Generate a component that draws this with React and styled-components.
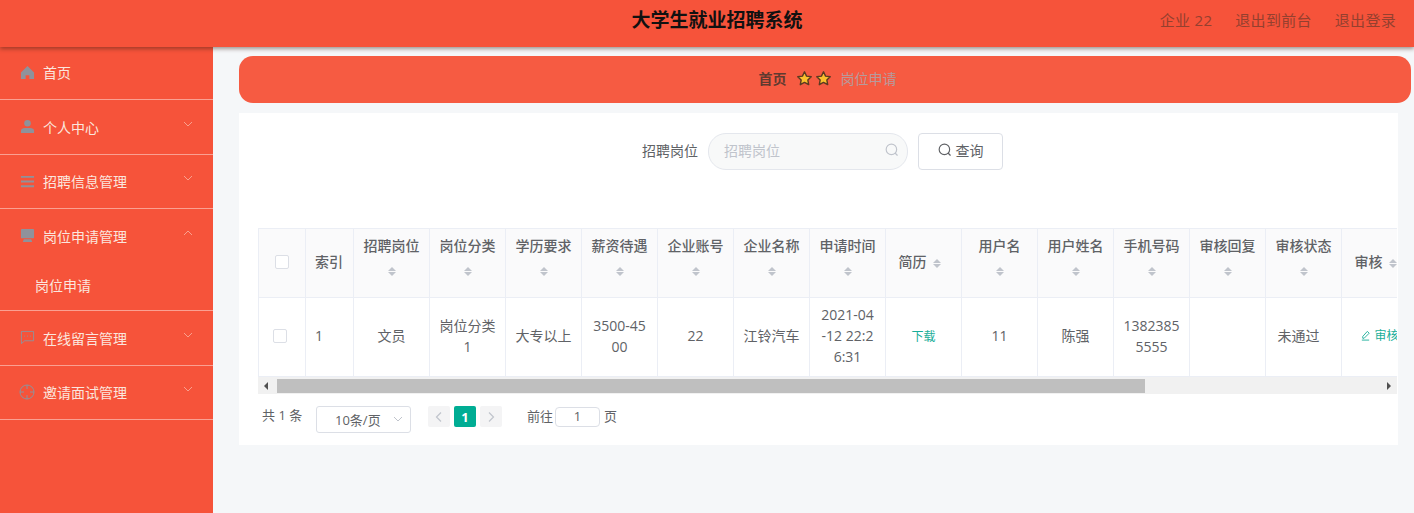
import React from 'react';
import styled, { createGlobalStyle } from 'styled-components';

const GlobalStyle = createGlobalStyle`
  html, body {
    margin: 0;
    height: 100%;
    overflow: hidden;
    background: #f5f7f9;
  }
  body, input {
    font-family: "Open Sans", "Noto Sans CJK SC", sans-serif;
  }
  * {
    box-sizing: border-box;
  }
`;

const Page = styled.div`
  display: flex;
  flex-direction: column;
  width: 1414px;
  height: 513px;
  overflow: hidden;
`;

const Header = styled.header`
  position: relative;
  z-index: 2;
  display: grid;
  grid-template-columns: 1fr auto 1fr;
  align-items: center;
  flex: none;
  height: 47px;
  padding: 0 18px 9px 38px;
  background: #f6533a;
  box-shadow: 0 2px 4px rgba(60, 30, 20, 0.45);
`;

const Title = styled.div`
  grid-column: 2;
  font-size: 19px;
  font-weight: 700;
  color: #111;
`;

const HeaderLinks = styled.div`
  display: flex;
  justify-content: flex-end;
  gap: 23px;
  font-size: 15px;
  letter-spacing: 0.3px;
  color: #94402f;
`;

const Body = styled.div`
  display: flex;
  flex: 1;
  min-height: 0;
`;

const Sidebar = styled.aside`
  flex: none;
  width: 213px;
  background: #f6533a;
`;

const MenuGroup = styled.div`
  border-bottom: 1px solid rgba(255, 255, 255, 0.45);
`;

const MenuRow = styled.div`
  display: flex;
  align-items: center;
  height: ${({ first }) => (first ? '52px' : '53.5px')};
  padding: 0 19px;
  padding-bottom: ${({ first }) => (first ? '2px' : '0')};
  font-size: 14px;
  color: #fbe6de;
`;

const MenuIcon = styled.span`
  display: flex;
  align-items: center;
  justify-content: center;
  width: 16px;
  height: 16px;
  margin-right: 8px;
  color: #8f929b;
`;

const MenuLabel = styled.span`
  flex: 1;
`;

const Caret = styled.svg`
  width: 12px;
  height: 12px;
  margin-top: ${({ flat }) => (flat ? '0' : '-6px')};
  color: #f9a08e;
`;

const SubItem = styled.div`
  display: flex;
  align-items: center;
  height: 47.5px;
  padding: 0 0 3px 35px;
  font-size: 14px;
  color: #fbe6de;
`;

const Main = styled.main`
  flex: 1;
  min-width: 0;
  padding: 9px 0 0 26px;
`;

const Breadcrumb = styled.div`
  display: flex;
  align-items: center;
  justify-content: center;
  gap: 9px;
  width: 1172px;
  height: 47px;
  padding: 0 0 3px 5px;
  border-radius: 14px;
  background: #f65b42;
  font-size: 14px;
`;

const CrumbHome = styled.span`
  font-weight: 700;
  color: #5f3a30;
`;

const CrumbCurrent = styled.span`
  color: #b79a9c;
`;

const Stars = styled.span`
  display: flex;
  gap: 2px;
`;

const Card = styled.section`
  width: 1159px;
  height: 332px;
  margin-top: 10px;
  padding: 20px 0 0 19px;
  background: #fff;
`;

const SearchRow = styled.div`
  display: flex;
  align-items: center;
  justify-content: center;
  height: 37px;
  margin-right: 11px;
`;

const SearchLabel = styled.label`
  margin-right: 10px;
  padding-bottom: 3px;
  font-size: 14px;
  color: #606266;
`;

const SearchBox = styled.div`
  display: flex;
  align-items: center;
  justify-content: space-between;
  width: 200px;
  height: 37px;
  padding: 0 8px 3px 15px;
  border: 1px solid #e4e7ed;
  border-radius: 18px;
  background: #f8f9f9;
  font-size: 14px;
  color: #c0c4cc;
`;

const SearchButton = styled.button`
  display: flex;
  align-items: center;
  justify-content: center;
  gap: 4px;
  width: 85px;
  height: 37px;
  margin-left: 10px;
  padding: 0 0 3px;
  border: 1px solid #dcdfe6;
  border-radius: 4px;
  background: #fff;
  font-family: inherit;
  font-size: 14px;
  color: #606266;
`;

const TableFrame = styled.div`
  width: 1139px;
  margin-top: 58px;
  overflow: hidden;
`;

const Table = styled.table`
  table-layout: fixed;
  width: 1159px;
  border-collapse: collapse;
  font-size: 14px;
  color: #606266;
`;

const Th = styled.th`
  height: 69px;
  padding: 0 9px 3px;
  border: 1px solid #ebeef5;
  background: #fafafb;
  font-weight: 500;
  line-height: 23px;
  text-align: ${({ left }) => (left ? 'left' : 'center')};
  color: #606266;
  vertical-align: middle;
`;

const Td = styled.td`
  height: 79px;
  padding: 0 ${({ nudge }) => (nudge ? '19px' : '9px')} 3px 9px;
  border: 1px solid #ebeef5;
  line-height: 21px;
  text-align: ${({ left }) => (left ? 'left' : 'center')};
  word-break: break-all;
`;

const SortIcon = styled.span`
  display: ${({ inline }) => (inline ? 'inline-flex' : 'flex')};
  flex-direction: column;
  align-items: center;
  gap: 1px;
  margin: ${({ inline }) => (inline ? '0 8px 0 6px' : '10px auto 14px')};
  vertical-align: middle;

  &::before,
  &::after {
    content: '';
    width: 0;
    height: 0;
    border-left: 4.5px solid transparent;
    border-right: 4.5px solid transparent;
  }

  &::before {
    border-bottom: 4.5px solid #c0c4cc;
  }

  &::after {
    border-top: 4.5px solid #c0c4cc;
  }
`;

const Checkbox = styled.span`
  display: block;
  width: 14px;
  height: 14px;
  margin: 0 auto;
  transform: translateX(${({ row }) => (row ? '-2px' : '0')});
  border: 1px solid #dcdfe6;
  border-radius: 2px;
  background: #fff;
`;

const GreenLink = styled.span`
  display: inline-flex;
  align-items: center;
  gap: 3px;
  font-size: 12px;
  color: #1aae99;
  white-space: nowrap;
`;

const ScrollBar = styled.div`
  display: flex;
  align-items: center;
  justify-content: space-between;
  height: 17px;
  padding: 0 6px;
  background: #f1f1f1;
`;

const ScrollThumb = styled.div`
  width: 868px;
  height: 14px;
  margin: 0 auto 0 9px;
  background: #bfbfbf;
`;

const ScrollArrow = styled.span`
  width: 0;
  height: 0;
  border-top: 4px solid transparent;
  border-bottom: 4px solid transparent;
  border-${({ side }) => (side === 'left' ? 'right' : 'left')}: 4px solid #505050;
`;

const Pagination = styled.div`
  display: flex;
  align-items: flex-start;
  margin-top: 12px;
  font-size: 13px;
  color: #606266;
`;

const Total = styled.span`
  width: 58px;
  padding-left: 4px;
  line-height: 19px;
`;

const PageSize = styled.div`
  display: flex;
  align-items: center;
  justify-content: space-between;
  width: 95px;
  height: 27px;
  margin-right: 17px;
  padding: 0 6px 1px 18px;
  border: 1px solid #dcdfe6;
  border-radius: 3px;
`;

const PageButton = styled.span`
  display: flex;
  align-items: center;
  justify-content: center;
  width: 22px;
  height: 21px;
  margin-right: 4px;
  border-radius: 2px;
  background: ${({ active }) => (active ? '#00ad94' : '#f4f4f5')};
  font-size: 13px;
  font-weight: 700;
  color: ${({ active }) => (active ? '#fff' : '#c0c4cc')};
`;

const Jump = styled.div`
  display: flex;
  align-items: center;
  height: 21px;
  margin-left: 21px;
  padding-bottom: 2px;
`;

const JumpInput = styled.span`
  display: block;
  width: 45px;
  height: 20px;
  margin: 2px 4px 0 2px;
  border: 1px solid #dcdfe6;
  border-radius: 4px;
  line-height: 16px;
  text-align: center;
`;

const Star = () => (
  <svg width="17" height="17" viewBox="0 0 24 24">
    <path
      d="M12 2.500l2.900 6.100 6.600.9-4.800 4.600 1.200 6.600-5.900-3.200-5.900 3.200 1.200-6.600L2.500 9.500l6.600-.9z"
      fill="#fbc02d"
      stroke="#5c3a21"
      strokeWidth="2"
      strokeLinejoin="round"
    />
  </svg>
);

const SearchGlyph = ({ color }) => (
  <svg width="14" height="14" viewBox="0 0 24 24" fill="none" stroke={color} strokeWidth="2" strokeLinecap="round">
    <circle cx="11" cy="11" r="9" />
    <path d="M18 18l3 3" />
  </svg>
);

const Chevron = ({ up, flat, color }) => (
  <Caret viewBox="0 0 12 12" fill="none" stroke="currentColor" strokeWidth="1" flat={flat} style={color ? { color } : undefined}>
    <path d={up ? 'M2 8l4-4 4 4' : 'M2 4l4 4 4-4'} />
  </Caret>
);

const PagerArrow = ({ right }) => (
  <svg width="10" height="12" viewBox="0 0 10 12" fill="none" stroke="#c0c4cc" strokeWidth="1.2">
    <path d={right ? 'M3 1.500l4.500 4.500L3 10.500' : 'M7 1.500L2.500 6 7 10.500'} />
  </svg>
);

const HomeIcon = () => (
  <svg width="15" height="15" viewBox="0 0 16 16" fill="currentColor">
    <path d="M8 1L1 8v7h5v-4h4v4h5V8z" />
  </svg>
);

const UserIcon = () => (
  <svg width="15" height="15" viewBox="0 0 16 16" fill="currentColor">
    <circle cx="8" cy="4.500" r="3.500" />
    <path d="M1 15v-2.500C1 10.500 3 9.500 5 9.500h6c2 0 4 1 4 3V15z" />
  </svg>
);

const ListIcon = () => (
  <svg width="15" height="15" viewBox="0 0 16 16" fill="none" stroke="currentColor" strokeWidth="2">
    <path d="M1 3h14M1 8h14M1 13h14" />
  </svg>
);

const MonitorIcon = () => (
  <svg width="15" height="15" viewBox="0 0 16 16" fill="currentColor">
    <path d="M2 1h12a1 1 0 0 1 1 1v8a1 1 0 0 1-1 1H2a1 1 0 0 1-1-1V2a1 1 0 0 1 1-1zM4 12h8l1 3H3z" />
  </svg>
);

const ChatIcon = () => (
  <svg width="15" height="15" viewBox="0 0 16 16" fill="none" stroke="currentColor" strokeWidth="1">
    <path d="M1.500 1.500h13v10H5l-3.500 3z" />
    <path d="M4.500 6.500h1M7.500 6.500h1M10.500 6.500h1" />
  </svg>
);

const TargetIcon = () => (
  <svg width="16" height="16" viewBox="0 0 16 16" fill="none" stroke="currentColor" strokeWidth="1">
    <circle cx="8" cy="8" r="7" />
    <path d="M8 1v4M8 11v4M1 8h4M11 8h4" />
  </svg>
);

const columns = [
  { label: '招聘岗位', value: '文员' },
  { label: '岗位分类', value: '岗位分类1' },
  { label: '学历要求', value: '大专以上' },
  { label: '薪资待遇', value: '3500-4500' },
  { label: '企业账号', value: '22' },
  { label: '企业名称', value: '江铃汽车' },
  { label: '申请时间', value: '2021-04-12 22:26:31' },
  { label: '简历', inline: true, link: '下载' },
  { label: '用户名', value: '11' },
  { label: '用户姓名', value: '陈强' },
  { label: '手机号码', value: '13823855555' },
  { label: '审核回复', value: '' },
  { label: '审核状态', value: '未通过', nudge: true },
  { label: '审核', inline: true, audit: true },
];

const menus = [
  { label: '个人中心', icon: <UserIcon /> },
  { label: '招聘信息管理', icon: <ListIcon /> },
  { label: '岗位申请管理', icon: <MonitorIcon />, open: true, children: ['岗位申请'] },
  { label: '在线留言管理', icon: <ChatIcon /> },
  { label: '邀请面试管理', icon: <TargetIcon /> },
];

const App = () => (
  <Page>
    <GlobalStyle />
    <Header>
      <Title>大学生就业招聘系统</Title>
      <HeaderLinks>
        <span>企业 22</span>
        <span>退出到前台</span>
        <span>退出登录</span>
      </HeaderLinks>
    </Header>
    <Body>
      <Sidebar>
        <MenuGroup>
          <MenuRow first>
            <MenuIcon><HomeIcon /></MenuIcon>
            <MenuLabel>首页</MenuLabel>
          </MenuRow>
        </MenuGroup>
        {menus.map((menu) => (
          <MenuGroup key={menu.label}>
            <MenuRow>
              <MenuIcon>{menu.icon}</MenuIcon>
              <MenuLabel>{menu.label}</MenuLabel>
              <Chevron up={menu.open} />
            </MenuRow>
            {menu.children && menu.children.map((child) => <SubItem key={child}>{child}</SubItem>)}
          </MenuGroup>
        ))}
      </Sidebar>
      <Main>
        <Breadcrumb>
          <CrumbHome>首页</CrumbHome>
          <Stars><Star /><Star /></Stars>
          <CrumbCurrent>岗位申请</CrumbCurrent>
        </Breadcrumb>
        <Card>
          <SearchRow>
            <SearchLabel>招聘岗位</SearchLabel>
            <SearchBox>
              <span>招聘岗位</span>
              <SearchGlyph color="#c0c4cc" />
            </SearchBox>
            <SearchButton>
              <SearchGlyph color="#606266" />
              查询
            </SearchButton>
          </SearchRow>
          <TableFrame>
            <Table>
              <colgroup>
                <col width="47" />
                <col width="48" />
                {columns.map((col) => <col key={col.label} width="76" />)}
              </colgroup>
              <thead>
                <tr>
                  <Th><Checkbox /></Th>
                  <Th left>索引</Th>
                  {columns.map((col) => (
                    <Th key={col.label}>
                      {col.label}
                      <SortIcon inline={col.inline} />
                    </Th>
                  ))}
                </tr>
              </thead>
              <tbody>
                <tr>
                  <Td><Checkbox row /></Td>
                  <Td left>1</Td>
                  {columns.map((col) => (
                    <Td key={col.label} nudge={col.nudge}>
                      {col.link && <GreenLink>{col.link}</GreenLink>}
                      {col.audit && (
                        <GreenLink>
                          <svg width="11" height="11" viewBox="0 0 12 12" fill="none" stroke="currentColor" strokeWidth="1">
                            <path d="M8 1.500l2 2-5.500 5.500H3V7zM2 11h8" />
                          </svg>
                          审核
                        </GreenLink>
                      )}
                      {col.value}
                    </Td>
                  ))}
                </tr>
              </tbody>
            </Table>
            <ScrollBar>
              <ScrollArrow side="left" />
              <ScrollThumb />
              <ScrollArrow side="right" />
            </ScrollBar>
          </TableFrame>
          <Pagination>
            <Total>共 1 条</Total>
            <PageSize>
              10条/页
              <Chevron flat color="#c0c4cc" />
            </PageSize>
            <PageButton><PagerArrow /></PageButton>
            <PageButton active>1</PageButton>
            <PageButton><PagerArrow right /></PageButton>
            <Jump>
              前往
              <JumpInput>1</JumpInput>
              页
            </Jump>
          </Pagination>
        </Card>
      </Main>
    </Body>
  </Page>
);

export default App;
